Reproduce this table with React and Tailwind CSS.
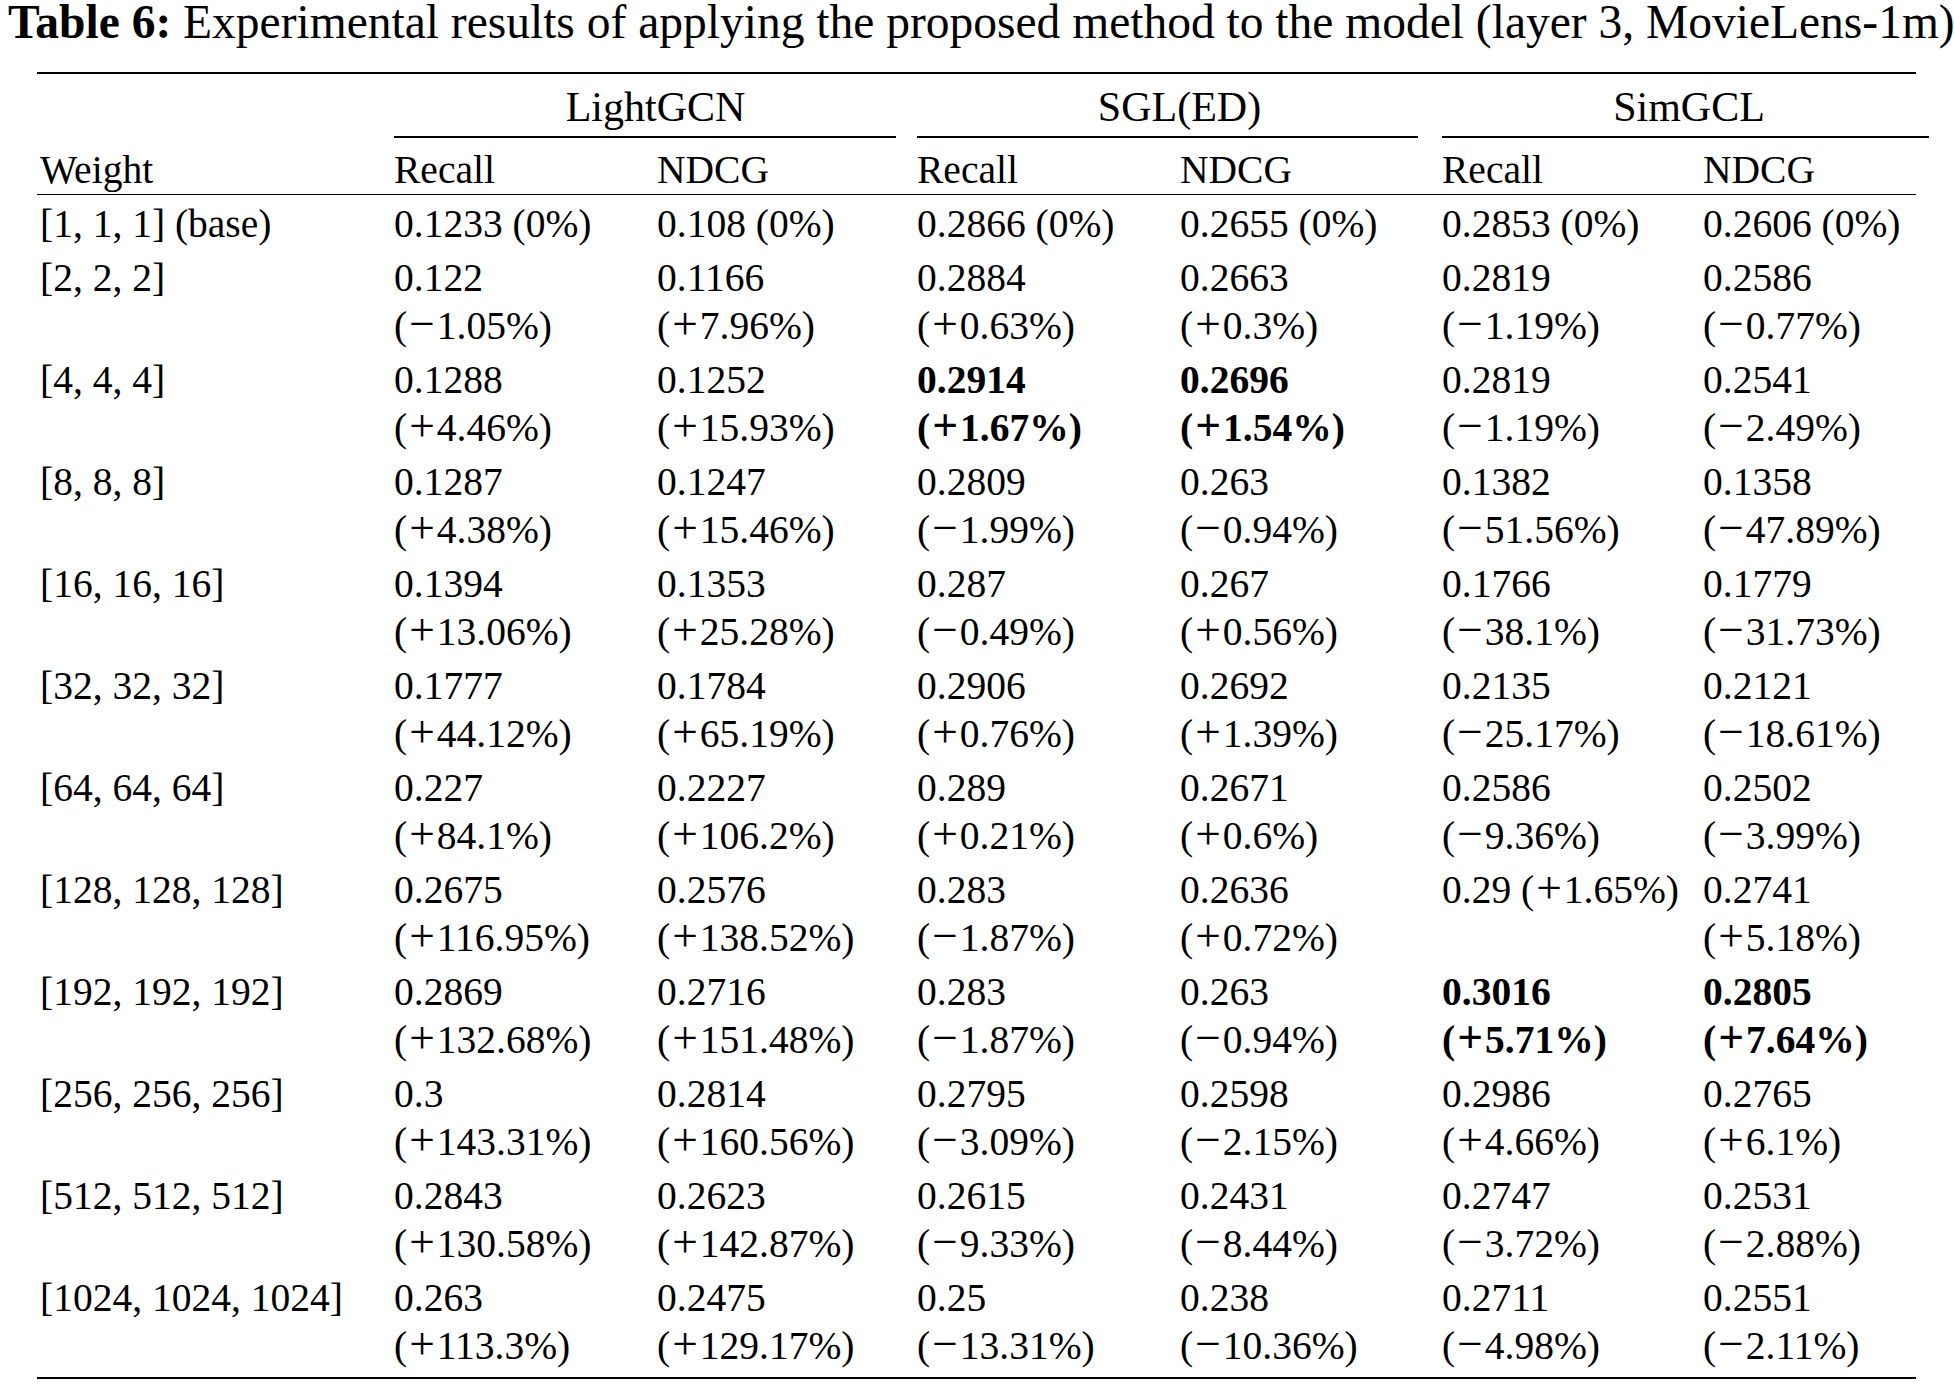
import React from "react";

const rows = [
  ["[1, 1, 1] (base)", [["0.1233 (0%)"], ["0.108 (0%)"], ["0.2866 (0%)"], ["0.2655 (0%)"], ["0.2853 (0%)"], ["0.2606 (0%)"]]],
  ["[2, 2, 2]", [["0.122", "(−1.05%)"], ["0.1166", "(+7.96%)"], ["0.2884", "(+0.63%)"], ["0.2663", "(+0.3%)"], ["0.2819", "(−1.19%)"], ["0.2586", "(−0.77%)"]]],
  ["[4, 4, 4]", [["0.1288", "(+4.46%)"], ["0.1252", "(+15.93%)"], ["0.2914", "(+1.67%)", true], ["0.2696", "(+1.54%)", true], ["0.2819", "(−1.19%)"], ["0.2541", "(−2.49%)"]]],
  ["[8, 8, 8]", [["0.1287", "(+4.38%)"], ["0.1247", "(+15.46%)"], ["0.2809", "(−1.99%)"], ["0.263", "(−0.94%)"], ["0.1382", "(−51.56%)"], ["0.1358", "(−47.89%)"]]],
  ["[16, 16, 16]", [["0.1394", "(+13.06%)"], ["0.1353", "(+25.28%)"], ["0.287", "(−0.49%)"], ["0.267", "(+0.56%)"], ["0.1766", "(−38.1%)"], ["0.1779", "(−31.73%)"]]],
  ["[32, 32, 32]", [["0.1777", "(+44.12%)"], ["0.1784", "(+65.19%)"], ["0.2906", "(+0.76%)"], ["0.2692", "(+1.39%)"], ["0.2135", "(−25.17%)"], ["0.2121", "(−18.61%)"]]],
  ["[64, 64, 64]", [["0.227", "(+84.1%)"], ["0.2227", "(+106.2%)"], ["0.289", "(+0.21%)"], ["0.2671", "(+0.6%)"], ["0.2586", "(−9.36%)"], ["0.2502", "(−3.99%)"]]],
  ["[128, 128, 128]", [["0.2675", "(+116.95%)"], ["0.2576", "(+138.52%)"], ["0.283", "(−1.87%)"], ["0.2636", "(+0.72%)"], ["0.29 (+1.65%)"], ["0.2741", "(+5.18%)"]]],
  ["[192, 192, 192]", [["0.2869", "(+132.68%)"], ["0.2716", "(+151.48%)"], ["0.283", "(−1.87%)"], ["0.263", "(−0.94%)"], ["0.3016", "(+5.71%)", true], ["0.2805", "(+7.64%)", true]]],
  ["[256, 256, 256]", [["0.3", "(+143.31%)"], ["0.2814", "(+160.56%)"], ["0.2795", "(−3.09%)"], ["0.2598", "(−2.15%)"], ["0.2986", "(+4.66%)"], ["0.2765", "(+6.1%)"]]],
  ["[512, 512, 512]", [["0.2843", "(+130.58%)"], ["0.2623", "(+142.87%)"], ["0.2615", "(−9.33%)"], ["0.2431", "(−8.44%)"], ["0.2747", "(−3.72%)"], ["0.2531", "(−2.88%)"]]],
  ["[1024, 1024, 1024]", [["0.263", "(+113.3%)"], ["0.2475", "(+129.17%)"], ["0.25", "(−13.31%)"], ["0.238", "(−10.36%)"], ["0.2711", "(−4.98%)"], ["0.2551", "(−2.11%)"]]],
];

const cols = "grid grid-cols-[357px_263px_260px_263px_262px_261px_213px]";

// math-style sign: a little wider than the text glyph
function Line({ text }) {
  const m = text.match(/^(.*?\()([+−])(.*)$/);
  if (!m) return <span>{text}</span>;
  return (
    <span>
      {m[1]}
      <span className="mx-[2px] text-[1.15em] leading-[0]">{m[2]}</span>
      {m[3]}
    </span>
  );
}

function Cell({ data }) {
  const bold = data[2] === true;
  const lines = data.filter((d) => typeof d === "string");
  return (
    <div className={`flex flex-col whitespace-nowrap ${bold ? "font-bold" : ""}`}>
      {lines.map((l) => (
        <Line key={l} text={l} />
      ))}
    </div>
  );
}

export default function App() {
  return (
    <div className="w-[1954px] min-h-[1387px] bg-white text-black font-['Liberation_Serif','Times_New_Roman',serif]">
      {/* Caption */}
      <p className="pl-[8px] text-[47.5px] leading-[44px] whitespace-nowrap">
        <span className="font-bold">Table 6:</span> Experimental results of applying the proposed method to the model (layer 3, MovieLens-1m)
      </p>

      {/* Table */}
      <div className="ml-[37px] w-[1879px] mt-[28px] text-[39.5px]">
        <div className="h-[2px] bg-black" />

        {/* Group headers */}
        <div className={`${cols} mt-[9px] text-[42px] leading-[48px]`}>
          <div />
          <div className="col-span-2 text-center">LightGCN</div>
          <div className="col-span-2 text-center">SGL(ED)</div>
          <div className="col-span-2 pl-[20px] text-center">SimGCL</div>
        </div>
        <div className={`${cols} mt-[5px]`}>
          <div />
          <div className="col-span-2 mr-[21px] h-[1.5px] bg-black" />
          <div className="col-span-2 mr-[24px] h-[1.5px] bg-black" />
          <div className="col-span-2 -mr-[13px] h-[1.5px] bg-black" />
        </div>

        {/* Column headers */}
        <div className={`${cols} mt-[9px] leading-[46px]`}>
          <div className="pl-[3px]">Weight</div>
          <div>Recall</div>
          <div>NDCG</div>
          <div>Recall</div>
          <div>NDCG</div>
          <div>Recall</div>
          <div>NDCG</div>
        </div>
        <div className="mt-[1px] h-[1.5px] bg-black" />

        {/* Body */}
        <div className="mt-[2px] flex flex-col leading-[48px]">
          {rows.map(([weight, cells]) => (
            <div key={weight} className={`${cols} py-[3px]`}>
              <div className="pl-[3px] whitespace-nowrap">{weight}</div>
              {cells.map((c, i) => (
                <Cell key={i} data={c} />
              ))}
            </div>
          ))}
        </div>

        <div className="mt-[4px] h-[2px] bg-black" />
      </div>
    </div>
  );
}
